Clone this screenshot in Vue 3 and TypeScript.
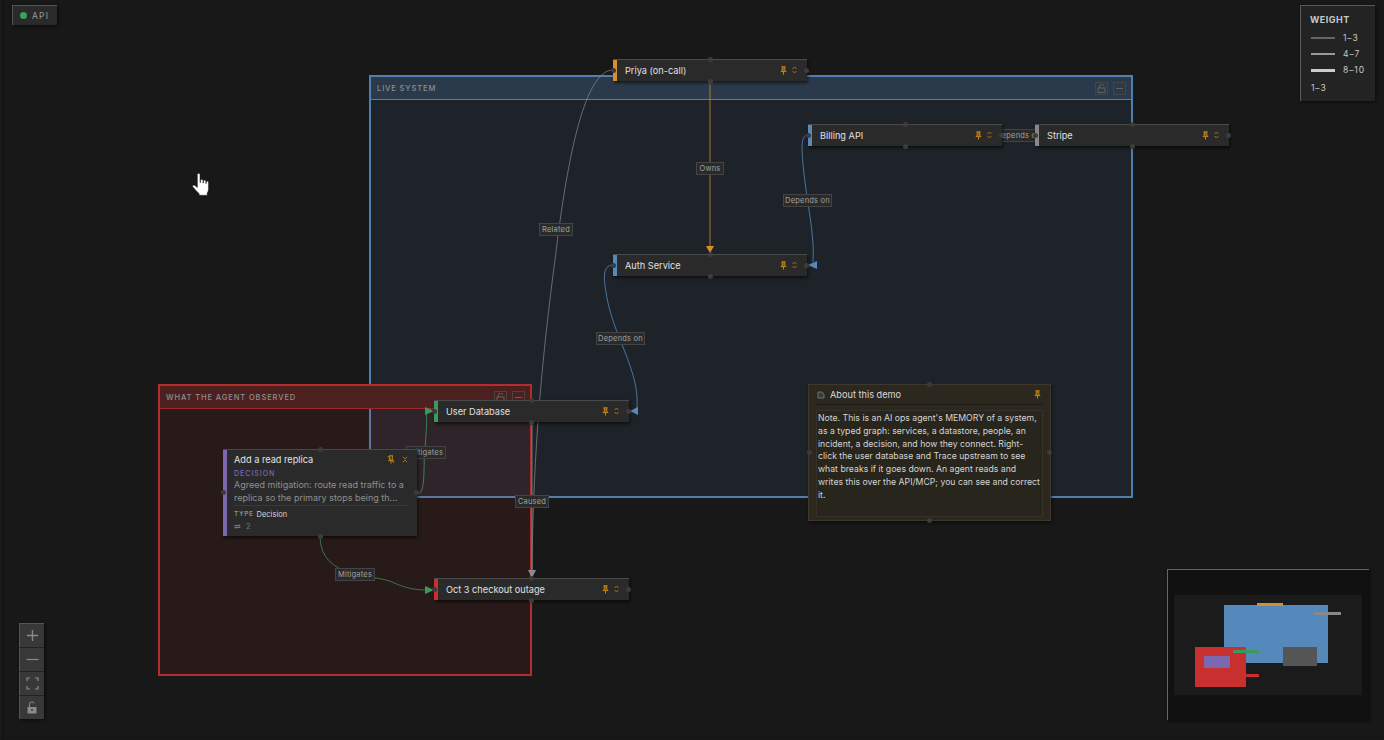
<script setup lang="ts">
/**
 * Graph canvas: two groups, typed nodes, labelled edges, plus the floating
 * API badge, weight legend, zoom controls and minimap.
 */

interface GraphNode {
  id: string
  label: string
  x: number
  y: number
  w: number
  h: number
  accent: string
}

interface EdgeLabel {
  text: string
  x: number
  y: number
  w: number
}

interface Edge {
  d: string
  color: string
  opacity: number
}

interface Arrow {
  points: string
  color: string
}

interface MiniRect {
  x: number
  y: number
  w: number
  h: number
  fill: string
}

const nodes: GraphNode[] = [
  { id: 'priya', label: 'Priya (on-call)', x: 613, y: 59, w: 194, h: 22, accent: '#d98e2b' },
  { id: 'auth', label: 'Auth Service', x: 613, y: 254, w: 194, h: 22, accent: '#5588bb' },
  { id: 'billing', label: 'Billing API', x: 808, y: 124, w: 194, h: 22, accent: '#5588bb' },
  { id: 'stripe', label: 'Stripe', x: 1035, y: 124, w: 194, h: 22, accent: '#888888' },
  { id: 'userdb', label: 'User Database', x: 434, y: 400, w: 195, h: 22, accent: '#3a9a5c' },
  { id: 'outage', label: 'Oct 3 checkout outage', x: 434, y: 578, w: 195, h: 22, accent: '#c83030' },
]

const edges: Edge[] = [
  { d: 'M710 81 L710 246', color: '#d98e2b', opacity: 0.75 },
  { d: 'M613 70 C586 70 568 150 555 260 C543 350 533 450 532 571', color: '#8a8a8a', opacity: 0.7 },
  { d: 'M808 135 C800 135 802 150 803 165 C807 205 815 235 813 262', color: '#5588bb', opacity: 0.8 },
  { d: 'M613 265 C602 265 604 280 606 292 C612 335 640 370 637 408', color: '#5588bb', opacity: 0.8 },
  { d: 'M417 494 C426 494 423 470 425 448 C427 425 427 411 426 411', color: '#3a9a5c', opacity: 0.8 },
  { d: 'M320 536 C320 580 375 574 392 582 C405 588 415 590 426 590', color: '#3a9a5c', opacity: 0.7 },
  { d: 'M532 423 L532 571', color: '#8a8a8a', opacity: 0.8 },
]

const arrows: Arrow[] = [
  { points: '706,246 714,246 710,253', color: '#d98e2b' },
  { points: '808,265 817,261 817,269', color: '#5588bb' },
  { points: '630,411 638,407 638,415', color: '#5588bb' },
  { points: '434,411 425,407 425,415', color: '#3a9a5c' },
  { points: '434,590 425,586 425,594', color: '#3a9a5c' },
  { points: '528,570 536,570 532,578', color: '#8a8a8a' },
]

const edgeLabels: EdgeLabel[] = [
  { text: 'Owns', x: 696, y: 162, w: 28 },
  { text: 'Related', x: 539, y: 223, w: 34 },
  { text: 'Depends on', x: 783, y: 194, w: 49 },
  { text: 'Depends on', x: 994, y: 129, w: 49 },
  { text: 'Depends on', x: 596, y: 332, w: 49 },
  { text: 'Mitigates', x: 406, y: 446, w: 40 },
  { text: 'Caused', x: 515, y: 495, w: 34 },
  { text: 'Mitigates', x: 335, y: 568, w: 40 },
]

const legendRows = [
  { range: '1–3', size: 'thin' },
  { range: '4–7', size: 'mid' },
  { range: '8–10', size: 'thick' },
]

const miniRects: MiniRect[] = [
  { x: 50, y: 10, w: 104, h: 58, fill: '#5588bb' },
  { x: 83, y: 8, w: 26, h: 3, fill: '#d98e2b' },
  { x: 140, y: 17, w: 27, h: 3, fill: '#888888' },
  { x: 21, y: 52, w: 51, h: 40, fill: '#c83030' },
  { x: 30, y: 61, w: 26, h: 12, fill: '#7b68ae' },
  { x: 59, y: 55, w: 26, h: 3, fill: '#3a9a5c' },
  { x: 59, y: 79, w: 26, h: 3, fill: '#c83030' },
  { x: 109, y: 52, w: 34, h: 19, fill: '#555555' },
]

function nodeBox(n: GraphNode) {
  return { left: `${n.x}px`, top: `${n.y}px`, width: `${n.w}px`, height: `${n.h}px` }
}

function labelBox(l: EdgeLabel) {
  return { left: `${l.x}px`, top: `${l.y}px`, width: `${l.w}px` }
}
</script>

<template>
  <div class="canvas">
    <!-- groups -->
    <section class="group group-blue">
      <header class="group-head">
        <span class="group-title">LIVE SYSTEM</span>
        <span class="group-btn">
          <svg width="9" height="9" viewBox="0 0 9 9" fill="none" stroke="currentColor">
            <rect x="1" y="4" width="7" height="4.5" />
            <path d="M2.5 4V2a2 2 0 0 1 4 0" />
          </svg>
        </span>
        <span class="group-btn">
          <svg width="9" height="9" viewBox="0 0 9 9" stroke="currentColor"><path d="M1 4.5h7" /></svg>
        </span>
      </header>
    </section>
    <section class="group group-red">
      <header class="group-head">
        <span class="group-title">WHAT THE AGENT OBSERVED</span>
        <span class="group-btn">
          <svg width="9" height="9" viewBox="0 0 9 9" fill="none" stroke="currentColor">
            <rect x="1" y="4" width="7" height="4.5" />
            <path d="M2.5 4V2a2 2 0 0 1 4 0" />
          </svg>
        </span>
        <span class="group-btn">
          <svg width="9" height="9" viewBox="0 0 9 9" stroke="currentColor"><path d="M1 4.5h7" /></svg>
        </span>
      </header>
    </section>

    <!-- edges -->
    <svg class="edges" width="1384" height="740" fill="none">
      <path v-for="e in edges" :key="e.d" :d="e.d" :stroke="e.color" :stroke-opacity="e.opacity" stroke-width="1" />
      <polygon v-for="a in arrows" :key="a.points" :points="a.points" :fill="a.color" />
    </svg>
    <div v-for="(l, i) in edgeLabels" :key="i" class="edge-label" :style="labelBox(l)">{{ l.text }}</div>

    <!-- plain nodes -->
    <div v-for="n in nodes" :key="n.id" class="node" :style="nodeBox(n)">
      <span class="accent" :style="{ background: n.accent }"></span>
      <span class="node-label">{{ n.label }}</span>
      <svg class="pin" width="7" height="9" viewBox="0 0 7 9" fill="currentColor" fill-opacity=".55" stroke="currentColor">
        <path d="M1.500 .8h4M2.200 .8v3.400L1 5.600h5L4.800 4.200V.8M3.500 5.600V8.600" />
      </svg>
      <svg class="updown" width="5" height="8" viewBox="0 0 5 8" fill="none" stroke="currentColor">
        <path d="M.6 3 2.500 1l1.900 2M.6 5l1.900 2 1.900-2" />
      </svg>
      <i class="port port-t"></i><i class="port port-b"></i><i class="port port-l"></i><i class="port port-r"></i>
    </div>

    <!-- expanded decision node -->
    <div class="node node-card">
      <span class="accent accent-purple"></span>
      <div class="card-head">
        <span class="card-title">Add a read replica</span>
        <svg class="pin" width="8" height="9" viewBox="0 0 8 9" fill="none" stroke="currentColor">
          <path d="M2 .8h4M2.700 .8v3.400L1.500 5.600h5L5.300 4.200V.8M4 5.600V8.600M.8 1l6.400 7" />
        </svg>
        <svg class="updown" width="6" height="7" viewBox="0 0 6 7" fill="none" stroke="currentColor">
          <path d="M.8.8 3 3l2.200-2.200M.8 6.200 3 4l2.200 2.200" />
        </svg>
      </div>
      <div class="card-kind">DECISION</div>
      <p class="card-text">Agreed mitigation: route read traffic to a replica so the primary stops being th...</p>
      <div class="card-meta">
        <div class="meta-row"><span class="meta-key">TYPE</span> <span class="meta-value">Decision</span></div>
        <div class="meta-row meta-dim"><span>⇄</span> <span>2</span></div>
      </div>
      <i class="port port-t"></i><i class="port port-b"></i><i class="port port-l"></i><i class="port port-r"></i>
    </div>

    <!-- note -->
    <div class="note">
      <div class="note-head">
        <svg width="8" height="8" viewBox="0 0 8 8" fill="#3a3a36" stroke="#6e6e6e">
          <path d="M1 1h4l2 2v4H1z" />
        </svg>
        <span class="note-title">About this demo</span>
        <svg class="pin" width="7" height="9" viewBox="0 0 7 9" fill="currentColor" fill-opacity=".55" stroke="currentColor">
          <path d="M1.500 .8h4M2.200 .8v3.400L1 5.600h5L4.800 4.200V.8M3.500 5.600V8.600" />
        </svg>
      </div>
      <div class="note-body">Note. This is an AI ops agent's MEMORY of a system, as a typed graph: services, a datastore, people, an incident, a decision, and how they connect. Right-click the user database and Trace upstream to see what breaks if it goes down. An agent reads and writes this over the API/MCP; you can see and correct it.</div>
      <i class="port port-t"></i><i class="port port-b"></i><i class="port port-l"></i><i class="port port-r"></i>
    </div>

    <!-- overlays -->
    <div class="api-badge"><span class="api-dot"></span>API</div>

    <aside class="legend">
      <div class="legend-title">WEIGHT</div>
      <div v-for="r in legendRows" :key="r.range" class="legend-row">
        <span class="legend-line" :class="r.size"></span>
        <span>{{ r.range }}</span>
      </div>
      <div class="legend-current">1–3</div>
    </aside>

    <div class="controls">
      <button class="ctl">
        <svg width="13" height="13" viewBox="0 0 13 13" stroke="currentColor" stroke-width="1.4"><path d="M6.500 1v11M1 6.500h11" /></svg>
      </button>
      <button class="ctl">
        <svg width="13" height="13" viewBox="0 0 13 13" stroke="currentColor" stroke-width="1.2"><path d="M.5 6.500h12" /></svg>
      </button>
      <button class="ctl">
        <svg width="13" height="13" viewBox="0 0 13 13" fill="none" stroke="currentColor" stroke-width="1.2">
          <path d="M1 4V1h3M9 1h3v3M12 9v3H9M4 12H1V9" />
        </svg>
      </button>
      <button class="ctl">
        <svg width="12" height="13" viewBox="0 0 12 13">
          <path d="M3.500 6V3.400a2.400 2.400 0 0 1 4.600-1" fill="none" stroke="currentColor" stroke-width="1.1" />
          <path d="M1.500 6h9v6.500h-9z" fill="currentColor" />
          <circle cx="6" cy="9" r="1" fill="#3a3a3a" />
        </svg>
      </button>
    </div>

    <div class="minimap">
      <svg width="188" height="100" class="mini-map">
        <rect width="188" height="100" fill="#1b1b1b" />
        <rect v-for="(r, i) in miniRects" :key="i" :x="r.x" :y="r.y" :width="r.w" :height="r.h" :fill="r.fill" />
      </svg>
    </div>

    <!-- pointer -->
    <svg class="hand" width="18" height="23" viewBox="0 0 14 24" preserveAspectRatio="none">
      <path
        d="M4.200 1.400c0-1.100 2-1.100 2 0V10l.4.1V7.600c0-1 1.900-1 1.900 0v2.800l.4.1V8.300c0-1 1.800-1 1.800 0v2.600l.4.1V9.400c0-1 1.700-1 1.700 0v7.200c0 2-.5 3-1 4.200v2.400H5.600v-1.600c-.8-1-2-2.400-3.100-4.300L.6 14.300c-.6-1.200.7-2 1.600-1.200l2 2.100z"
        fill="#fff"
        stroke="#222"
        stroke-width=".4"
      />
    </svg>
  </div>
</template>

<style scoped>
.canvas {
  position: relative;
  width: 1384px;
  height: 740px;
  overflow: hidden;
  background: #181818;
  font-family: Inter, 'Liberation Sans', sans-serif;
  color: #ddd;
}

.canvas::before {
  content: '';
  position: absolute;
  left: 3px;
  top: 0;
  bottom: 0;
  width: 1px;
  background: #101010;
}

.canvas::after {
  content: '';
  position: absolute;
  left: 0;
  right: 0;
  top: 737px;
  height: 1px;
  background: #141414;
}

.group {
  position: absolute;
  box-sizing: border-box;
  border-width: 2px;
  border-style: solid;
}

.group-blue {
  left: 369px;
  top: 75px;
  width: 764px;
  height: 423px;
  background: #1d2329;
  border-color: #4f7fae;
}

.group-red {
  left: 158px;
  top: 384px;
  width: 374px;
  height: 292px;
  background: rgba(200, 48, 48, 0.1);
  border-color: #b52c2c;
}

.group-head {
  display: flex;
  align-items: center;
  gap: 5px;
  box-sizing: border-box;
  height: 23px;
  padding: 0 5px 0 6px;
  border-bottom: 1px solid;
}

.group-blue .group-head {
  background: #2b3a4a;
  border-color: #4f7fae;
}

.group-red .group-head {
  background: #4d2020;
  border-color: #9c2a2a;
}

.group-title {
  flex: 1;
  font-size: 7.5px;
  font-weight: 500;
  letter-spacing: 0.9px;
  color: #8f8f8f;
}

.group-btn {
  display: flex;
  align-items: center;
  justify-content: center;
  width: 11px;
  height: 11px;
  border: 1px solid #454545;
  color: #626262;
}

.edges {
  position: absolute;
  left: 0;
  top: 0;
}

.edge-label {
  position: absolute;
  box-sizing: border-box;
  height: 13px;
  overflow: hidden;
  background: #2a2a2a;
  border: 1px solid #444;
  font-size: 7.5px;
  line-height: 11px;
  letter-spacing: 0.2px;
  text-align: center;
  white-space: nowrap;
  color: #a0a0a0;
}

.node {
  position: absolute;
  display: flex;
  align-items: center;
  box-sizing: border-box;
  padding: 0 10px 1px 12px;
  background: #2a2a2a;
  border-top: 1px solid #4a4a4a;
  box-shadow: 1px 2px 3px rgba(0, 0, 0, 0.6);
}

.accent {
  position: absolute;
  left: 0;
  top: 0;
  bottom: 0;
  width: 4px;
}

.accent-purple {
  background: #7b68ae;
}

.node-label {
  flex: 1;
  font-size: 9.2px;
  white-space: nowrap;
  color: #e0e0e0;
}

.pin {
  color: #c5860f;
  margin-right: 5px;
  flex-shrink: 0;
}

.updown {
  color: #a8760f;
  flex-shrink: 0;
}

.port {
  position: absolute;
  width: 5px;
  height: 5px;
  border-radius: 50%;
  background: #3c3c3c;
}

.port-t {
  left: calc(50% - 2.5px);
  top: -3px;
}

.port-b {
  left: calc(50% - 2.5px);
  bottom: -3px;
}

.port-l {
  left: -2px;
  top: calc(50% - 3px);
}

.port-r {
  right: -2px;
  top: calc(50% - 3px);
}

.node-card {
  display: block;
  left: 223px;
  top: 449px;
  width: 194px;
  height: 87px;
  padding: 3px 9px 0 11px;
}

.card-head {
  display: flex;
  align-items: center;
  height: 13px;
}

.card-head .pin {
  margin-right: 7px;
}

.card-title {
  flex: 1;
  font-size: 9.2px;
  color: #e4e4e4;
}

.card-kind {
  margin-top: 3px;
  font-size: 7px;
  font-weight: 500;
  letter-spacing: 1px;
  color: #7b68ae;
}

.card-text {
  margin: 1px 0 0;
  font-size: 9px;
  line-height: 12.5px;
  color: #8f8f8f;
}

.card-meta {
  margin-top: 1px;
  padding-top: 2px;
  border-top: 1px solid #3a3a3a;
  font-size: 7.5px;
}

.meta-row {
  display: flex;
  gap: 3px;
  height: 12px;
  align-items: center;
}

.meta-key {
  font-size: 6.5px;
  font-weight: 600;
  letter-spacing: 0.6px;
  color: #8f8f8f;
}

.meta-value {
  color: #d6d6d6;
}

.meta-dim {
  gap: 5px;
  color: #777;
}

.note {
  position: absolute;
  left: 808px;
  top: 384px;
  width: 243px;
  height: 137px;
  box-sizing: border-box;
  padding: 0 7px;
  background: #2c2820;
  border: 1px solid #3d382a;
  box-shadow: 1px 2px 3px rgba(0, 0, 0, 0.5);
}

.note-head {
  display: flex;
  align-items: center;
  height: 19px;
  padding-left: 1px;
  border-bottom: 1px solid #1d1b16;
}

.note-title {
  flex: 1;
  margin-left: 5px;
  font-size: 9.2px;
  color: #d8d8d8;
}

.note .pin {
  margin-right: 2px;
}

.note-body {
  box-sizing: border-box;
  height: 107px;
  margin-top: 5px;
  padding: 1px;
  background: #28251d;
  border: 1px solid #36322a;
  font-size: 8.7px;
  line-height: 12.75px;
  color: #d4d4d4;
}

.api-badge {
  position: absolute;
  left: 12px;
  top: 5px;
  display: flex;
  align-items: center;
  gap: 5px;
  box-sizing: border-box;
  width: 45px;
  height: 20px;
  padding-left: 7px;
  background: #2a2a2a;
  border-top: 1px solid #555;
  border-left: 1px solid #555;
  box-shadow: 1px 1px 3px rgba(0, 0, 0, 0.6);
  font-size: 8.5px;
  letter-spacing: 1.2px;
  color: #999;
}

.api-dot {
  width: 7px;
  height: 7px;
  border-radius: 50%;
  background: #3aa05c;
}

.legend {
  position: absolute;
  left: 1300px;
  top: 5px;
  width: 75px;
  height: 96px;
  box-sizing: border-box;
  padding: 8px 0 0 9px;
  background: #232323;
  border-top: 1px solid #5a5a5a;
  border-left: 1px solid #5a5a5a;
  box-shadow: 1px 1px 3px rgba(0, 0, 0, 0.6);
  font-size: 8.5px;
  letter-spacing: 0.9px;
  color: #c8c8c8;
}

.legend-title {
  height: 14px;
  font-size: 9px;
  font-weight: 700;
  letter-spacing: 0.5px;
  color: #c8c8c8;
  margin-bottom: 2px;
}

.legend-row {
  display: flex;
  align-items: center;
  gap: 8px;
  height: 16px;
}

.legend-line {
  width: 24px;
  margin-left: 1px;
  background: #888;
}

.thin {
  height: 2px;
  background: #666;
}

.mid {
  height: 2px;
  background: #999;
}

.thick {
  height: 3px;
  background: #ccc;
}

.legend-current {
  margin-top: 5px;
  margin-left: 1px;
}

.controls {
  position: absolute;
  left: 19px;
  top: 623px;
  display: flex;
  flex-direction: column;
  width: 25px;
  box-shadow: 1px 1px 3px rgba(0, 0, 0, 0.6);
}

.ctl {
  display: flex;
  align-items: center;
  justify-content: center;
  width: 25px;
  height: 24px;
  padding: 0;
  background: #383838;
  border: 0;
  border-top: 1px solid #222;
  border-left: 1px solid #555;
  color: #8a8a8a;
}

.ctl:first-child {
  border-top-color: #555;
}

.minimap {
  position: absolute;
  left: 1167px;
  top: 569px;
  width: 202px;
  height: 151px;
  box-sizing: border-box;
  padding: 25px 6px 0;
  background: #111;
  border-top: 1px solid #666;
  border-left: 1px solid #666;
  box-shadow: 1px 1px 3px rgba(0, 0, 0, 0.6);
}

.mini-map {
  display: block;
}

.hand {
  position: absolute;
  left: 192px;
  top: 173px;
}
</style>

<style>
html,
body {
  background: #181818;
}
</style>
